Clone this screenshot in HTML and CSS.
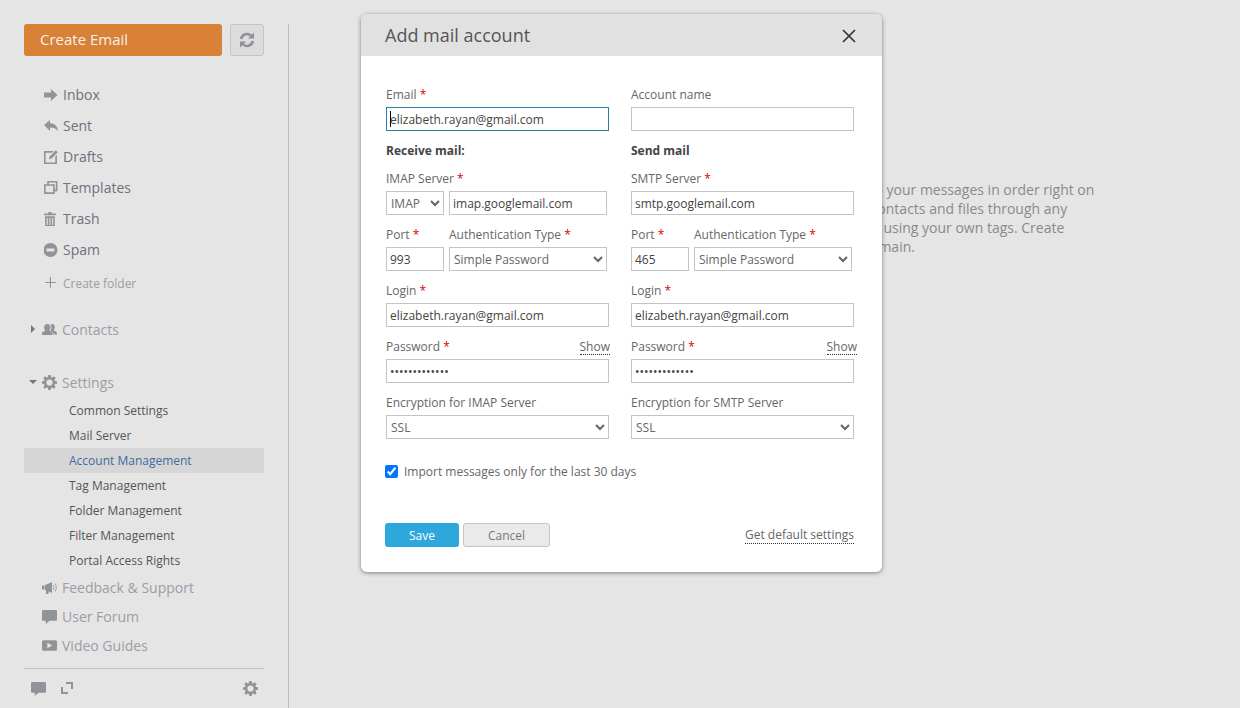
FILE: index.html
```html
<!DOCTYPE html>
<html lang="en">
<head>
  <meta charset="UTF-8">
  <meta name="viewport" content="width=device-width, initial-scale=1.0">
  <title>Mail</title>
  <link rel="stylesheet" href="styles.css">
</head>
<body>

  <svg class="icon-defs" width="0" height="0">
    <symbol id="i-gear" viewBox="0 0 16 16">
      <path fill-rule="evenodd" d="M6.700 0h2.600l.4 2.200 1.200.5 1.900-1.300 1.800 1.800-1.300 1.900.5 1.200 2.200.4v2.600l-2.200.4-.5 1.200 1.300 1.900-1.800 1.800-1.900-1.300-1.200.5-.4 2.200H6.700l-.4-2.200-1.200-.5-1.900 1.300-1.800-1.800 1.300-1.900-.5-1.200L0 9.300V6.700l2.200-.4.5-1.200-1.300-1.900 1.800-1.800 1.900 1.300 1.200-.5zM8 4.700a3.300 3.300 0 1 0 0 6.600 3.300 3.300 0 0 0 0-6.600z"/>
    </symbol>
    <symbol id="i-bubble" viewBox="0 0 14 14">
      <path d="M1 1h12a1 1 0 0 1 1 1v8a1 1 0 0 1-1 1H7l-3.500 3v-3H1a1 1 0 0 1-1-1V2a1 1 0 0 1 1-1z"/>
    </symbol>
  </svg>

  <aside class="sidebar">
    <div class="create-row">
      <a class="create-btn" href="#">Create Email</a>
      <button class="refresh-btn" type="button">
        <svg width="16" height="16" viewBox="0 0 16 16" fill="none" stroke="#8f9296" stroke-width="2.600">
          <path d="M2.200 7A5.900 5.900 0 0 1 12.400 4"/>
          <path d="M13.800 9A5.900 5.900 0 0 1 3.600 12"/>
          <path d="M15 .5v6H9z" fill="#8f9296" stroke="none"/>
          <path d="M1 15.500v-6h6z" fill="#8f9296" stroke="none"/>
        </svg>
      </button>
    </div>

    <ul class="folders">
      <li>
        <svg class="nav-icon" viewBox="0 0 14 14"><path d="M0 4.500h7V1l6.500 6L7 13V9.500H0z"/></svg>
        Inbox
      </li>
      <li>
        <svg class="nav-icon" viewBox="0 0 14 14"><path d="M0 6l6-5v3.200c4.500 0 7.500 2.800 8 8.300-1.500-2.800-3.800-4-8-4V12z"/></svg>
        Sent
      </li>
      <li>
        <svg class="nav-icon" viewBox="1 1 13 13">
          <path d="M1 2h9L8.500 3.500h-6v9h9V7L13 5.500V14H1z"/>
          <path d="M12 1.300l1.800 1.800L8 8.900l-2.400.6.600-2.400z"/>
        </svg>
        Drafts
      </li>
      <li>
        <svg class="nav-icon" viewBox="1 1 13 13">
          <path fill-rule="evenodd" d="M4 1h9.500v9.500H11V13H1V4h3zm1.500 1.500V4H11v5h1V2.500zM2.500 5.500v6h7v-6z"/>
        </svg>
        Templates
      </li>
      <li>
        <svg class="nav-icon" viewBox="1 0 13 13">
          <path d="M5 0h3v1.500h4V3H1V1.500h4zM2 4h9v9H2zM3.500 5.500V12h1V5.500zm2.500 0V12h1V5.500zm2.500 0V12h1V5.500z" fill-rule="evenodd"/>
        </svg>
        Trash
      </li>
      <li>
        <svg class="nav-icon" viewBox="1 0.5 13 13">
          <path fill-rule="evenodd" d="M7 .5a6.500 6.500 0 1 1 0 13A6.500 6.500 0 0 1 7 .5zM3.300 5.700v2.600h7.400V5.700z"/>
        </svg>
        Spam
      </li>
      <li class="create-folder">
        <svg class="nav-icon" viewBox="1 1 13 13"><path d="M6.500 2h1v4.500H12v1H7.500V12h-1V7.500H2v-1h4.500z"/></svg>
        Create folder
      </li>
    </ul>

    <div class="section section-contacts">
      <span class="arrow arrow-right"></span>
      <svg class="section-icon" viewBox="0 0 15 14">
        <path d="M5.500 1.500c1.900 0 3 1.300 3 3.200 0 1.300-.5 2.400-1.300 3 0 .9 3.300 1.300 3.300 3.300v1.500H0V11c0-2 3.300-2.400 3.300-3.300-.7-.6-1.200-1.700-1.200-3 0-1.900 1.500-3.200 3.400-3.200z"/>
        <path d="M10 1.500c1.700 0 2.800 1.300 2.800 3.100 0 1.300-.5 2.300-1.200 2.900 0 .8 3.400 1.300 3.400 3.300V12h-3.300c-.3-2.200-2.500-2.800-3.500-3.500.9-1 1.300-2.500 1.200-4-.1-1-.4-1.700-.9-2.400.4-.4.9-.6 1.500-.6z"/>
      </svg>
      Contacts
    </div>

    <div class="section section-settings">
      <span class="arrow arrow-down"></span>
      <svg class="section-icon"><use href="#i-gear"/></svg>
      Settings
    </div>
    <ul class="settings-list">
      <li>Common Settings</li>
      <li>Mail Server</li>
      <li class="active">Account Management</li>
      <li>Tag Management</li>
      <li>Folder Management</li>
      <li>Filter Management</li>
      <li>Portal Access Rights</li>
    </ul>

    <div class="section section-help">
      <svg class="section-icon" viewBox="0 0 15 14">
        <path d="M0 5h2v4H0zM2.500 5L10 1.500v11L6.500 11v2.500h-2.500V10l-1.500-1z"/>
        <path d="M11 4.500c1 1.300 1 3.700 0 5M13 3c1.700 2.200 1.700 5.800 0 8" fill="none" stroke="#9a9ea5"/>
      </svg>
      Feedback &amp; Support
    </div>
    <div class="section section-help">
      <svg class="section-icon"><use href="#i-bubble"/></svg>
      User Forum
    </div>
    <div class="section section-help">
      <svg class="section-icon" viewBox="0 0 14 14">
        <path fill-rule="evenodd" d="M1.500 2h11A1.500 1.500 0 0 1 14 3.500v7a1.500 1.500 0 0 1-1.500 1.500h-11A1.500 1.500 0 0 1 0 10.500v-7A1.500 1.500 0 0 1 1.500 2zM5 4.500v5L9.500 7z"/>
      </svg>
      Video Guides
    </div>

    <div class="side-footer">
      <svg class="foot-icon"><use href="#i-bubble"/></svg>
      <svg class="foot-icon foot-expand" viewBox="1 1 12 12">
        <path d="M6 1h7v7h-2V3H6zM1 6h2v5h5v2H1z"/>
      </svg>
      <svg class="foot-icon foot-gear"><use href="#i-gear"/></svg>
    </div>
  </aside>

  <main class="content">
    <p class="intro">
      Keep your messages in order right on<br>
      on contacts and files through any<br>
      Tags using your own tags. Create<br>
      a domain.
    </p>
  </main>

  <div class="dialog">
    <div class="dialog-head">
      <h2>Add mail account</h2>
      <svg class="close-icon" width="14" height="14" viewBox="0 0 14 14" fill="none" stroke="#333" stroke-width="1.700">
        <path d="M1 1l12 12M13 1L1 13"/>
      </svg>
    </div>

    <form class="dialog-body">
      <div class="form-grid">
        <div class="field">
          <label>Email <i>*</i></label>
          <div class="focused-wrap">
            <input class="focused" type="text" value="elizabeth.rayan@gmail.com">
            <span class="caret"></span>
          </div>
        </div>
        <div class="field">
          <label>Account name</label>
          <input type="text">
        </div>

        <h3>Receive mail:</h3>
        <h3>Send mail</h3>

        <div class="field">
          <label>IMAP Server <i>*</i></label>
          <div class="pair">
            <select class="small"><option>IMAP</option></select>
            <input class="big" type="text" value="imap.googlemail.com">
          </div>
        </div>
        <div class="field">
          <label>SMTP Server <i>*</i></label>
          <input type="text" value="smtp.googlemail.com">
        </div>

        <div class="pair">
          <div class="field small">
            <label>Port <i>*</i></label>
            <input type="text" value="993">
          </div>
          <div class="field big">
            <label>Authentication Type <i>*</i></label>
            <select><option>Simple Password</option></select>
          </div>
        </div>
        <div class="pair">
          <div class="field small">
            <label>Port <i>*</i></label>
            <input type="text" value="465">
          </div>
          <div class="field big">
            <label>Authentication Type <i>*</i></label>
            <select><option>Simple Password</option></select>
          </div>
        </div>

        <div class="field">
          <label>Login <i>*</i></label>
          <input type="text" value="elizabeth.rayan@gmail.com">
        </div>
        <div class="field">
          <label>Login <i>*</i></label>
          <input type="text" value="elizabeth.rayan@gmail.com">
        </div>

        <div class="field">
          <div class="label-row">
            <label>Password <i>*</i></label>
            <a class="dotted show-left" href="#">Show</a>
          </div>
          <input type="password" value="1234567890123">
        </div>
        <div class="field">
          <div class="label-row">
            <label>Password <i>*</i></label>
            <a class="dotted show-right" href="#">Show</a>
          </div>
          <input type="password" value="1234567890123">
        </div>

        <div class="field">
          <label>Encryption for IMAP Server</label>
          <select><option>SSL</option></select>
        </div>
        <div class="field">
          <label>Encryption for SMTP Server</label>
          <select><option>SSL</option></select>
        </div>
      </div>

      <label class="check-row">
        <input type="checkbox" checked>
        Import messages only for the last 30 days
      </label>

      <div class="dialog-foot">
        <button class="btn btn-save" type="button">Save</button>
        <button class="btn btn-cancel" type="button">Cancel</button>
        <a class="dotted default-link" href="#">Get default settings</a>
      </div>
    </form>
  </div>

</body>
</html>
```

FILE: styles.css
```css
* {
  box-sizing: border-box;
}

body {
  margin: 0;
  height: 100vh;
  overflow: hidden;
  display: flex;
  background-color: #e5e5e5;
  font-family: "Open Sans", sans-serif;
  font-size: 14px;
  color: #333;
}

.icon-defs {
  position: absolute;
}

/* sidebar */
.sidebar {
  width: 289px;
  height: 100vh;
  padding: 24px 24px 0;
  position: relative;
  flex-shrink: 0;
}

.sidebar::after {
  content: "";
  position: absolute;
  top: 24px;
  bottom: 0;
  right: 0;
  width: 1px;
  background-color: #bcbcbc;
}

.create-row {
  display: flex;
  gap: 8px;
  width: 240px;
  height: 32px;
}

.create-btn {
  width: 198px;
  padding-left: 16px;
  line-height: 31px;
  border-radius: 3px;
  background-color: #d98137;
  color: #f6f0e9;
  font-size: 15px;
  text-decoration: none;
}

.refresh-btn {
  width: 34px;
  padding: 0;
  display: flex;
  align-items: center;
  justify-content: center;
  background-color: #dcdcdc;
  border: 1px solid #c4c4c4;
  border-radius: 3px;
}

.folders,
.settings-list {
  list-style-type: none;
  margin: 0;
  padding: 0;
  width: 240px;
}

.folders {
  margin-top: 23px;
}

.folders li {
  display: flex;
  align-items: center;
  height: 31px;
  padding-left: 20px;
  color: #6e727a;
}

.nav-icon {
  width: 14px;
  height: 14px;
  margin-right: 5px;
  fill: #909398;
  flex-shrink: 0;
}

.folders .create-folder {
  height: 34px;
  padding-top: 2px;
  font-size: 12px;
  color: #9a9ea5;
}

.section {
  display: flex;
  align-items: center;
  width: 240px;
  padding-left: 18px;
  height: 30px;
  color: #9a9ea5;
}

.section-icon {
  width: 15px;
  height: 15px;
  margin-right: 5px;
  fill: #909398;
  flex-shrink: 0;
}

.section-contacts {
  margin-top: 15px;
}

.section-settings {
  margin-top: 23px;
}

.section-help {
  height: 29px;
}

.arrow {
  position: absolute;
  width: 0;
  height: 0;
  border-style: solid;
  border-color: transparent;
}

.arrow-right {
  left: 31px;
  border-width: 4px 0 4px 4px;
  border-left-color: #777;
}

.arrow-down {
  left: 29px;
  border-width: 4px 4px 0 4px;
  border-top-color: #777;
}

.settings-list {
  margin-top: 1px;
}

.settings-list li {
  height: 25px;
  line-height: 25px;
  padding-left: 45px;
  font-size: 12px;
  color: #555;
}

.settings-list .active {
  background-color: #d6d6d6;
  color: #3d6c9e;
}

.side-footer {
  width: 240px;
  height: 40px;
  margin-top: 8px;
  padding: 0 7px;
  display: flex;
  align-items: center;
  border-top: 1px solid #c4c4c4;
}

.foot-icon {
  width: 15px;
  height: 15px;
  fill: #909398;
}

.foot-expand {
  width: 12px;
  height: 12px;
  margin-left: 15px;
  margin-top: -2px;
}

.foot-gear {
  margin-left: auto;
  margin-right: -1px;
}

/* page behind the dialog */
.content {
  flex: 1;
  padding: 180px 0 0 561px;
}

.intro {
  margin: 0;
  line-height: 19px;
  white-space: nowrap;
  color: #8a8a8a;
}

/* dialog */
.dialog {
  position: absolute;
  left: 361px;
  top: 14px;
  width: 521px;
  height: 558px;
  border-radius: 6px;
  background-color: #fff;
  box-shadow: 0 1px 4px rgba(0, 0, 0, 0.45);
  overflow: hidden;
}

.dialog-head {
  display: flex;
  align-items: center;
  justify-content: space-between;
  height: 42px;
  padding: 0 26px 0 24px;
  background-color: #e1e1e1;
}

.dialog-head h2 {
  margin: 0;
  font-size: 18px;
  font-weight: 400;
  color: #555;
}

.close-icon {
  margin-top: 2px;
}

.dialog-body {
  padding: 31px 28px 0 25px;
  font-size: 12px;
}

.form-grid {
  display: grid;
  grid-template-columns: 223px 223px;
  column-gap: 22px;
  row-gap: 12px;
}

.form-grid h3 {
  margin: 0;
  height: 16px;
  line-height: 16px;
  font-size: 12px;
  font-weight: 700;
  color: #444;
}

.field label,
.label-row {
  display: block;
  height: 16px;
  line-height: 16px;
  margin-bottom: 4px;
  color: #666;
}

.field i {
  font-style: normal;
  color: #e00000;
}

.label-row {
  display: flex;
  justify-content: space-between;
}

.field input,
.field select,
.pair > input,
.pair > select {
  display: block;
  width: 100%;
  height: 24px;
  margin: 0;
  padding: 0 3px;
  border: 1px solid #c4c4c4;
  border-radius: 0;
  outline: none;
  background-color: #fff;
  font-family: "Open Sans", sans-serif;
  font-size: 12px;
  color: #444;
}

.field select,
.pair > select {
  padding: 0;
  color: #666;
}

.pair {
  display: flex;
  gap: 5px;
}

.pair .small {
  width: 58px;
  flex-shrink: 0;
}

.pair .big {
  width: 158px;
  flex-shrink: 0;
}

.field .pair > select,
.field .pair > input {
  width: auto;
}

.field .pair > select.small {
  width: 58px;
}

.field .pair > input.big {
  width: 158px;
}

.focused-wrap {
  position: relative;
}

.field .focused {
  border-color: #2a7fa8;
}

.caret {
  position: absolute;
  left: 4px;
  top: 4px;
  width: 1px;
  height: 16px;
  background-color: #000;
}

.dotted {
  color: #666;
  text-decoration: none;
  border-bottom: 1px dotted #333;
}

.show-left {
  margin-right: -1px;
}

.show-right {
  margin-right: -3px;
}

.check-row {
  display: flex;
  align-items: center;
  gap: 6px;
  height: 16px;
  margin-top: 24px;
  margin-left: -1px;
  color: #666;
}

.check-row input {
  width: 13px;
  height: 13px;
  margin: 0;
}

.dialog-foot {
  display: flex;
  align-items: center;
  gap: 4px;
  margin-top: 44px;
  margin-left: -1px;
}

.btn {
  height: 24px;
  padding: 0;
  border-radius: 3px;
  font-family: "Open Sans", sans-serif;
  font-size: 12px;
}

.btn-save {
  width: 74px;
  border: none;
  background-color: #2da7dc;
  color: #fff;
}

.btn-cancel {
  width: 87px;
  border: 1px solid #c4c4c4;
  background-color: #eaeaea;
  color: #777;
}

.default-link {
  margin-left: auto;
}
```
